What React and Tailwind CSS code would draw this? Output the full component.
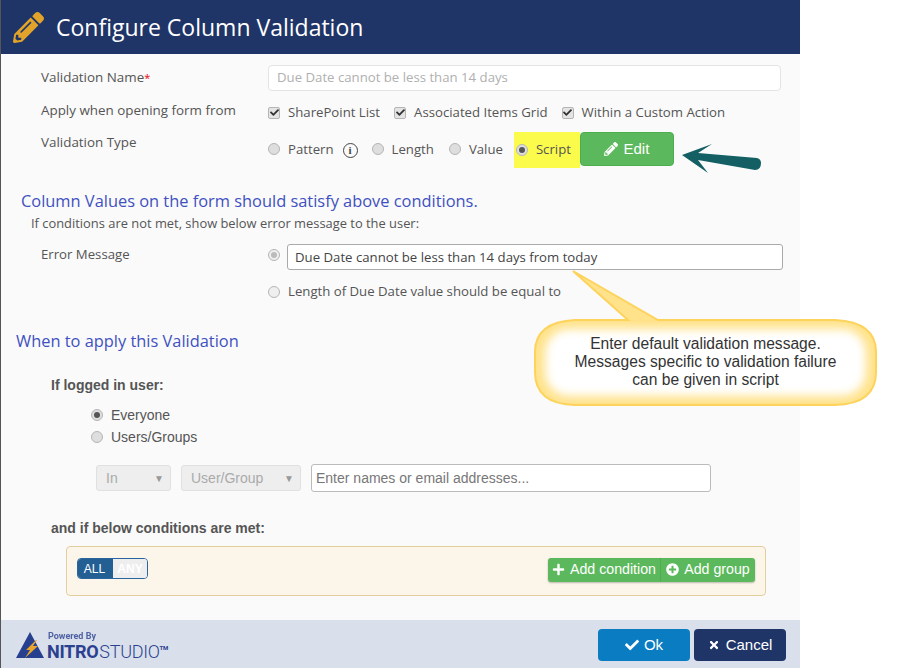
import { FaPencilAlt, FaPlus, FaPlusCircle, FaCheck, FaTimes } from 'react-icons/fa'

const Check = () => (
  <span className="w-[12px] h-[12px] rounded-[2px] border border-[#b5b5b5] bg-[#e4e4e4] flex items-center justify-center shrink-0">
    <FaCheck className="w-[9px] h-[9px] text-[#333]" />
  </span>
)

const Radio = ({ on, muted }) => (
  <span className={`w-[12px] h-[12px] rounded-full border border-[#b5b5b5] flex items-center justify-center shrink-0 ${muted ? 'bg-[#efefef]' : 'bg-[#dedede]'}`}>
    {on && <span className={`w-[6px] h-[6px] rounded-full ${muted ? 'bg-[#bbb]' : 'bg-[#555]'}`} />}
  </span>
)

const Select = ({ label, w }) => (
  <div className={`${w} h-[26px] rounded-[3px] border border-[#e0e0e0] bg-[#eeeeee] flex items-center justify-between pl-[9px] pr-[6px] text-[#aaa] text-[14px]`}>
    <span>{label}</span>
    <span className="text-[10px] text-[#999]">▼</span>
  </div>
)

export default function App() {
  return (
    <div className="relative w-[898px] h-[668px] bg-white overflow-hidden text-[13.2px] text-[#555] font-['Open_Sans',sans-serif]">
      <div className="w-[800px] h-[668px] flex flex-col bg-[#fafafa] border-l border-[#555]">
        {/* Cabecera */}
        <div className="h-[54px] bg-[#1f3568] flex items-center pl-[12px] shrink-0">
          <FaPencilAlt className="w-[31px] h-[31px] text-[#e2a32b]" />
          <h1 className="ml-[12px] pt-[1px] text-[23px] text-white">Configure Column Validation</h1>
        </div>

        <div className="flex-1 relative">
          <div className="flex items-center h-[26px] mt-[11px]">
            <div className="w-[267px] pl-[40px] -mt-[2px] text-[13.4px]">Validation Name<span className="text-red-600 text-[11px]">*</span></div>
            <div className="w-[513px] h-[26px] rounded-[4px] border border-[#e4e4e4] bg-white pl-[8px] flex items-center text-[#b0b0b0]">Due Date cannot be less than 14 days</div>
          </div>

          <div className="flex items-center h-[20px] mt-[12px]">
            <div className="w-[267px] pl-[40px] -mt-[6px] text-[13.4px]">Apply when opening form from</div>
            <div className="flex items-center gap-[8px]"><Check /><span>SharePoint List</span></div>
            <div className="flex items-center gap-[8px] ml-[14px]"><Check /><span>Associated Items Grid</span></div>
            <div className="flex items-center gap-[8px] ml-[14px]"><Check /><span>Within a Custom Action</span></div>
          </div>

          <div className="flex items-center h-[37px] mt-[8px]">
            <div className="w-[267px] pl-[40px] -mt-[15px] text-[13.4px]">Validation Type</div>
            <div className="flex items-center gap-[8px]"><Radio /><span>Pattern</span></div>
            <span className="ml-[9px] mt-[2px] w-[15px] h-[15px] rounded-full border border-[#444] flex items-center justify-center text-[11px] font-bold text-[#444] font-['Liberation_Serif',serif]">i</span>
            <div className="flex items-center gap-[8px] ml-[14px]"><Radio /><span>Length</span></div>
            <div className="flex items-center gap-[8px] ml-[15px]"><Radio /><span>Value</span></div>
            <div className="flex items-center gap-[8px] ml-[11px] bg-[#fbfb4b] h-[36px] w-[66px] pl-[2px]"><Radio on /><span>Script</span></div>
            <button className="w-[94px] h-[34px] -mt-[1px] rounded-[4px] bg-[#5cb85c] border border-[#4cae4c] text-white text-[15px] flex items-center justify-center gap-[5px] font-['Liberation_Sans',sans-serif]">
              <FaPencilAlt className="w-[14px] h-[14px]" />Edit
            </button>
          </div>

          <h2 className="ml-[20px] mt-[22px] text-[16.4px] leading-[22px] text-[#3f51c0]">Column Values on the form should satisfy above conditions.</h2>
          <p className="ml-[30px] mt-[1px] leading-[20px] text-[12.9px]">If conditions are not met, show below error message to the user:</p>

          <div className="flex items-center h-[26px] mt-[11px]">
            <div className="w-[267px] pl-[40px] -mt-[4px]">Error Message</div>
            <div className="w-[19px] -mt-[4px]"><Radio on muted /></div>
            <div className="w-[496px] h-[26px] rounded-[3px] border border-[#aaa] bg-white pl-[7px] pt-[1px] flex items-center text-[#444]">Due Date cannot be less than 14 days from today</div>
          </div>

          <div className="flex items-center h-[20px] mt-[12px]">
            <div className="w-[267px]" />
            <div className="w-[20px]"><Radio muted /></div>
            <span>Length of Due Date value should be equal to</span>
          </div>

          <h2 className="ml-[15px] mt-[28px] text-[16.4px] leading-[22px] text-[#3f51c0]">When to apply this Validation</h2>

          <div className="font-['Liberation_Sans',sans-serif]">
            <div className="ml-[50px] mt-[23px] font-bold leading-[20px] text-[14px]">If logged in user:</div>
            <div className="ml-[90px] mt-[9px] flex items-center gap-[8px] h-[22px] text-[14px]"><Radio on /><span>Everyone</span></div>
            <div className="ml-[90px] flex items-center gap-[8px] h-[22px] text-[14px]"><Radio /><span>Users/Groups</span></div>

            <div className="ml-[95px] mt-[16px] flex items-center gap-[10px]">
              <Select label="In" w="w-[75px]" />
              <Select label="User/Group" w="w-[120px]" />
              <div className="w-[400px] h-[28px] rounded-[3px] border border-[#bbb] bg-white pl-[4px] flex items-center text-[14px] text-[#777]">Enter names or email addresses...</div>
            </div>

            <div className="ml-[50px] mt-[26px] font-bold leading-[20px] text-[14px]">and if below conditions are met:</div>

            <div className="ml-[65px] mt-[8px] w-[700px] h-[50px] rounded-[4px] border border-[#e3cf9d] bg-[#fcf5e9] flex items-start justify-between pl-[10px] pr-[10px] pt-[11px]">
              <div className="flex h-[21px] w-[71px] rounded-[4px] border border-[#2a659f] overflow-hidden text-[12px]">
                <span className="w-[35px] bg-[#245f94] text-white flex items-center justify-center pr-[2px]">ALL</span>
                <span className="flex-1 bg-[#eeeeee] text-white font-bold flex items-center justify-center">ANY</span>
              </div>
              <div className="flex h-[24px] rounded-[3px] bg-[#5cb85c] text-white text-[14.2px] shadow-[0_1px_2px_rgba(0,0,0,0.25)]">
                <span className="w-[113px] flex items-center justify-center gap-[5px] border-r border-[#4cae4c] pb-[1px]"><FaPlus className="w-[13px] h-[13px]" />Add condition</span>
                <span className="w-[94px] flex items-center justify-center gap-[5px] pb-[1px]"><FaPlusCircle className="w-[13px] h-[13px]" />Add group</span>
              </div>
            </div>
          </div>
        </div>

        {/* Pie */}
        <div className="h-[48px] bg-[#d9dfeb] shrink-0 flex items-center justify-between pl-[15px] pr-[14px]">
          <div className="flex items-end mt-[2px]">
            <svg width="28" height="28" viewBox="0 0 28 28">
              <path d="M14 1 L28 27 L0 27 Z" fill="#26408f" />
              <path d="M20 9 L10 19 L14 19 L9 27 L22 15 L17 15 L21 9 Z" fill="#e9a52c" />
            </svg>
            <div className="ml-[3px] -mb-[2px] font-['Roboto',sans-serif] text-[#2b4190]">
              <div className="text-[9px] leading-[10px] font-bold pl-[1px] mb-[2px] opacity-80">Powered By</div>
              <div className="flex items-start leading-[18px] text-[18px] tracking-[-0.3px]">
                <span className="font-bold">NITRO</span>
                <span className="ml-[1px] font-light">STUDIO</span>
                <span className="text-[6px] leading-[10px] font-bold">TM</span>
              </div>
            </div>
          </div>
          <div className="flex gap-[4px] mt-[2px] font-['Liberation_Sans',sans-serif] text-[15px] text-white">
            <button className="w-[92px] h-[32px] rounded-[4px] bg-[#0a7cc1] flex items-center justify-center gap-[5px]"><FaCheck className="w-[14px] h-[14px]" />Ok</button>
            <button className="w-[92px] h-[32px] rounded-[4px] bg-[#1f3568] flex items-center justify-center gap-[6px]"><FaTimes className="w-[12px] h-[12px]" />Cancel</button>
          </div>
        </div>
      </div>

      {/* Flecha sobre el botón Edit */}
      <svg className="absolute left-[675px] top-[138px]" width="95" height="40" viewBox="675 138 95 40">
        <path d="M682 155 L712 144 L698 153 L757 158 Q761 159 761 163 Q761 170 755 170 L698 160 L708 173 Z" fill="#135f63" />
      </svg>

      {/* Globo de aviso */}
      <svg className="absolute left-[530px] top-[265px]" width="352" height="146" viewBox="530 265 352 146">
        <defs>
          <filter id="glow" x="-10%" y="-10%" width="120%" height="120%"><feGaussianBlur stdDeviation="5" /></filter>
          <clipPath id="bubbleClip"><path d="M573 271 L658 320 L835 320 Q876 322 876 352 L876 372 Q876 404 835 405 L575 405 Q535 404 535 372 L535 352 Q535 322 575 320 L628 320 Z" /></clipPath>
        </defs>
        <path d="M573 271 L658 320 L835 320 Q876 322 876 352 L876 372 Q876 404 835 405 L575 405 Q535 404 535 372 L535 352 Q535 322 575 320 L628 320 Z" fill="#ffe28a" stroke="#fdd35c" strokeWidth="2" />
        <g clipPath="url(#bubbleClip)">
          <rect x="545" y="329" width="321" height="67" rx="24" fill="#fff" filter="url(#glow)" />
        </g>
      </svg>
      <div className="absolute left-[535px] top-[335px] w-[341px] text-center text-[15.6px] leading-[18px] text-[#333] font-['Liberation_Sans',sans-serif]">
        Enter default validation message.<br />Messages specific to validation failure<br />can be given in script
      </div>
    </div>
  )
}
